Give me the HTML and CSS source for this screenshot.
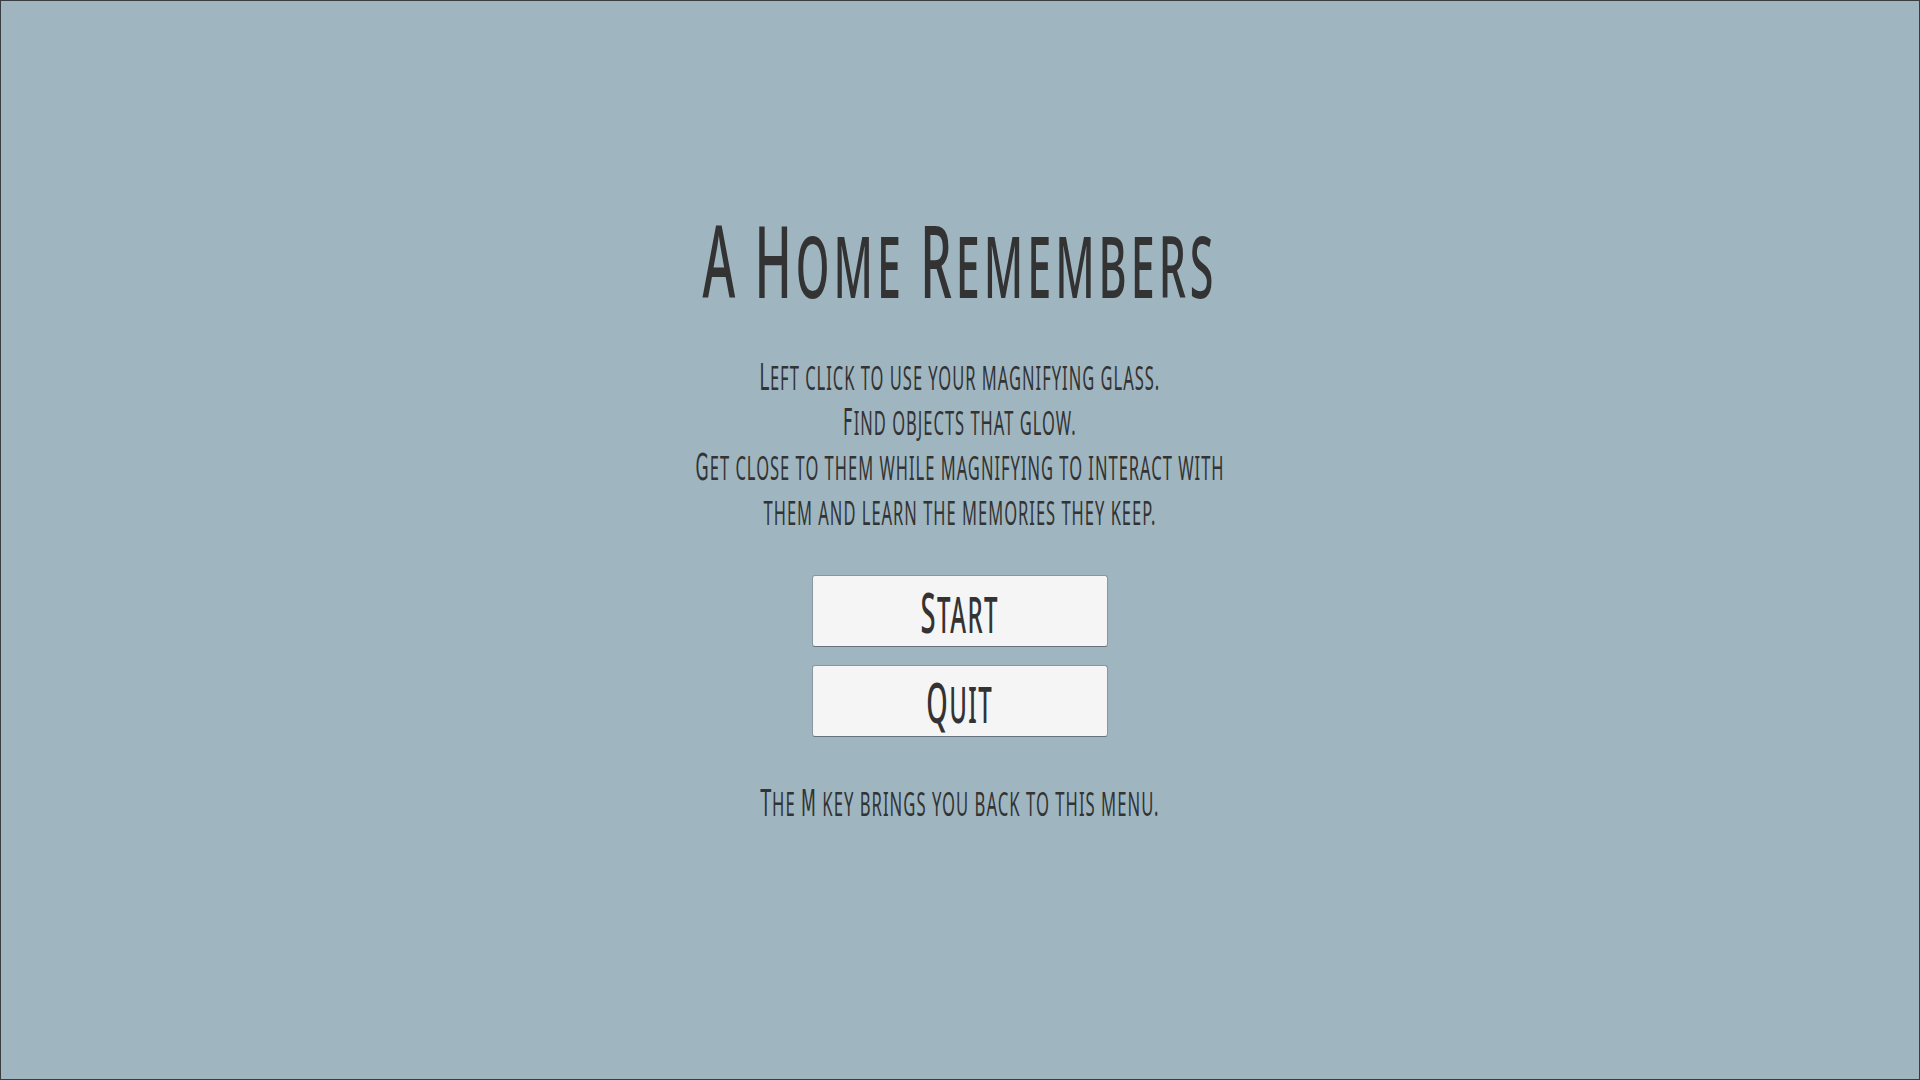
FILE: index.html
```html
<!DOCTYPE html>
<html lang="en">
<head>
<meta charset="UTF-8">
<link rel="stylesheet" href="styles.css">
</head>
<body>
<div class="screen">
  <div class="menu">
    <h1 class="title"><span class="squeeze"><span class="cap">A</span> <span class="cap">H</span>ome <span class="cap">R</span>emembers</span></h1>

    <div class="howto">
      <p><span class="squeeze"><span class="cap">L</span>eft click to use your magnifying glass.</span></p>
      <p><span class="squeeze"><span class="cap">F</span>ind objects that glow.</span></p>
      <p><span class="squeeze"><span class="cap">G</span>et close to them while magnifying to interact with</span></p>
      <p><span class="squeeze">them and learn the memories they keep.</span></p>
    </div>

    <div class="buttons">
      <button class="btn"><span class="squeeze"><span class="cap">S</span>tart</span></button>
      <button class="btn"><span class="squeeze"><span class="cap">Q</span>uit</span></button>
    </div>

    <p class="hint"><span class="squeeze"><span class="cap">T</span>he <span class="cap">M</span> key brings you back to this menu.</span></p>
  </div>
</div>
</body>
</html>
```

FILE: styles.css
```css
html, body {
  margin: 0;
  padding: 0;
}

body {
  width: 1920px;
  height: 1080px;
  overflow: hidden;
  background: #9fb6c1;
}

.screen {
  box-sizing: border-box;
  width: 100%;
  height: 100%;
  border: 1px solid #3a3d40;
  background: #9fb6c1;
  color: #333333;
  font-family: "Noto Sans", "DejaVu Sans Condensed", sans-serif;
  font-stretch: 62.5%;
  text-transform: uppercase;
  display: flex;
  justify-content: center;
}

.menu {
  display: flex;
  flex-direction: column;
  align-items: center;
  padding-top: 218px;
}

.squeeze {
  display: inline-block;
  white-space: nowrap;
  transform: scaleX(0.5);
}

.title {
  margin: 0;
  font-size: 86px;
  font-weight: 500;
  line-height: 80px;
  letter-spacing: 8px;
}

.title .squeeze { transform: scaleX(0.5); }

.title .cap { font-size: 100px; line-height: 80px; }

.howto {
  margin-top: 50px;
  text-align: center;
}

.howto p {
  margin: 0;
  font-size: 33px;
  line-height: 45px;
  font-weight: 400;
  letter-spacing: 2px;
}

.howto .squeeze { transform: scaleX(0.5); }

.howto .cap, .hint .cap {
  font-family: "DejaVu Sans Condensed", "Noto Sans", sans-serif;
  font-size: 38px;
  line-height: 45px;
}

.buttons {
  margin-top: 40px;
  display: flex;
  flex-direction: column;
  gap: 18px;
}

.btn {
  box-sizing: border-box;
  width: 296px;
  height: 72px;
  padding: 0;
  border: 1px solid #8796a0;
  border-bottom-color: #66737c;
  border-radius: 3px;
  background: #f5f5f5;
  color: #333333;
  font-family: inherit;
  font-stretch: inherit;
  text-transform: inherit;
  font-size: 50px;
  font-weight: 500;
  line-height: 70px;
  letter-spacing: 3px;
}

.btn .squeeze { transform: scaleX(0.48); }

.btn .cap { font-size: 57px; line-height: 70px; }

.hint {
  margin: 44px 0 0;
  font-size: 33px;
  line-height: 45px;
  font-weight: 400;
  letter-spacing: 2px;
}

.hint .squeeze { transform: scaleX(0.505); }
```
